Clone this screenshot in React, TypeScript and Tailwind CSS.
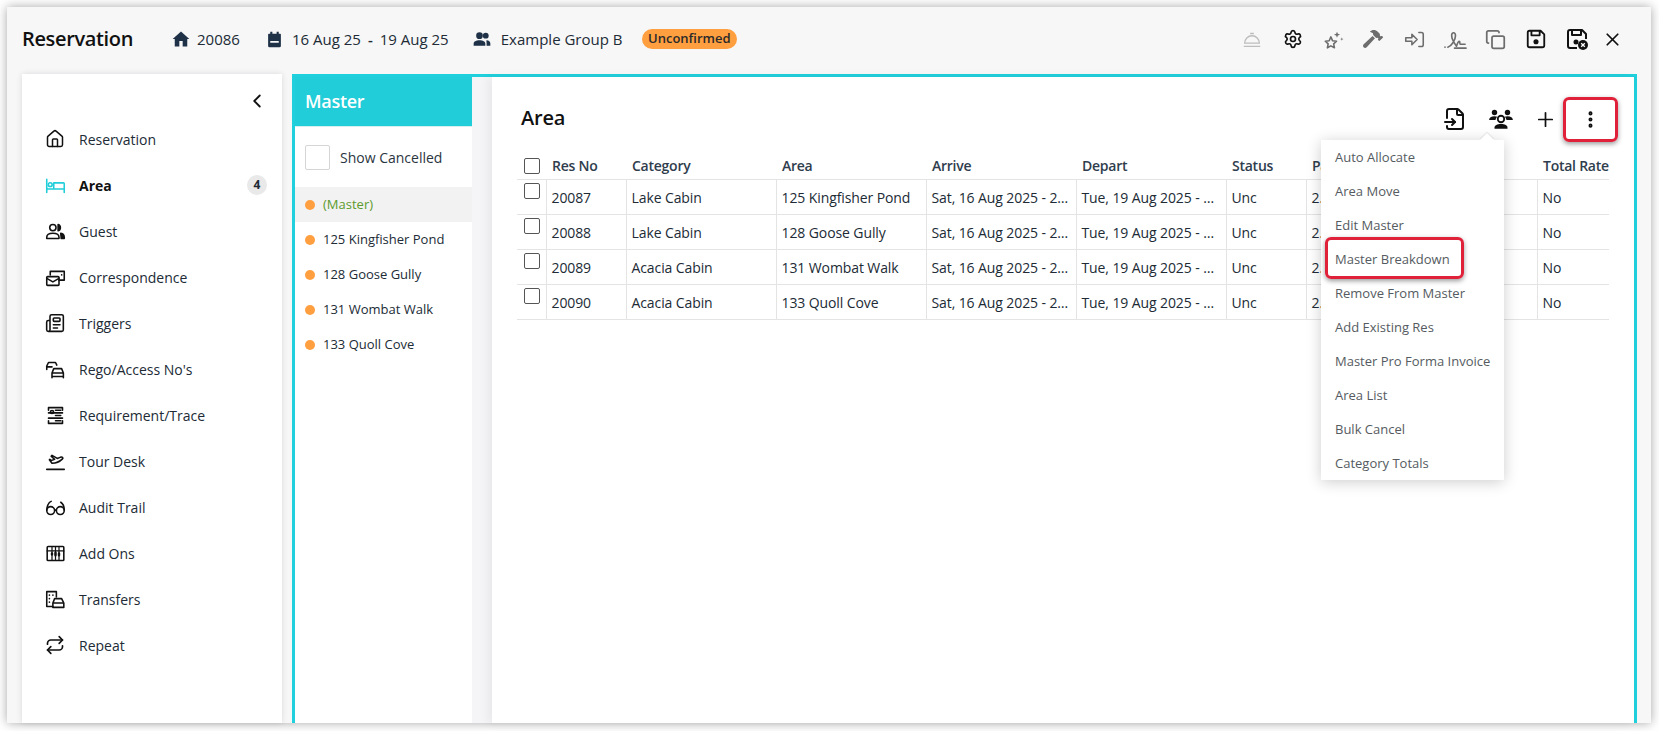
import { ChevronLeft, Copy, FileInput, EllipsisVertical, House, Newspaper, Plus, Repeat, Settings, X } from 'lucide-react';
import { FaHammer } from 'react-icons/fa';
import type { ReactNode } from 'react';

const Ico = ({ children, className = '', fill = 'none' }: { children: ReactNode; className?: string; fill?: string }) => (
  <svg viewBox="0 0 24 24" fill={fill} stroke={fill === 'none' ? 'currentColor' : 'none'} strokeWidth="1.8" strokeLinecap="round" strokeLinejoin="round" className={className}>
    {children}
  </svg>
);

// sidebar icons, drawn to look like the app's own set
const navItems: { label: string; icon: ReactNode; active?: boolean; badge?: number }[] = [
  { label: 'Reservation', icon: <House className="w-5 h-5" strokeWidth={1.8} /> },
  {
    label: 'Area',
    active: true,
    badge: 4,
    icon: (
      <Ico className="w-[21px] h-[21px] text-[#20cdd8]">
        <path d="M2 5v15M2 16h20M22 20V10a1 1 0 0 0-1-1H10v7" />
        <circle cx="6" cy="11" r="2.2" />
      </Ico>
    ),
  },
  {
    label: 'Guest',
    icon: (
      <Ico className="w-[21px] h-[21px]">
        <circle cx="9" cy="7.5" r="3.6" />
        <path d="M2 20v-1.5C2 15.5 5 14 9 14s7 1.500 7 4.500V20z" />
        <path fill="currentColor" d="M15 4a3.800 3.800 0 0 1 0 7.200zM18 14c2.500.5 4 2 4 4.500V20h-3.500c0-2.500-.5-4.500-.5-6z" />
      </Ico>
    ),
  },
  {
    label: 'Correspondence',
    icon: (
      <Ico className="w-[21px] h-[21px]">
        <path d="M6 9V5h16v10h-6" />
        <rect x="2" y="11" width="14" height="10" rx="1" />
        <path d="M2 13l7 4 7-4M19 9h.1" />
      </Ico>
    ),
  },
  {
    label: 'Triggers',
    icon: <Newspaper className="w-5 h-5" strokeWidth={1.9} />,
  },
  {
    label: "Rego/Access No's",
    icon: (
      <Ico className="w-[21px] h-[21px]">
        <path d="M2 12V8l2-4h8l1.500 3M2 9h6" />
        <path d="M8 20v-4l2-5h9l2 5v4zM8 20v1.500M21 20v1.500M8 16h13" />
      </Ico>
    ),
  },
  {
    label: 'Requirement/Trace',
    icon: (
      <Ico className="w-[21px] h-[21px]">
        <path d="M4 3h16M4 21h16M4 3v3M20 3v3M4 21v-3M20 21v-3M4 9h16M4 15h16M12 6h6M12 12h6M12 18h6" />
        <circle cx="8" cy="8" r="1.800" />
      </Ico>
    ),
  },
  {
    label: 'Tour Desk',
    icon: (
      <Ico className="w-[21px] h-[21px]">
        <path d="M2 21h20" />
        <path d="M5 10l3 4c4 0 9-2 12-5 1-1 0-2.500-2-2l-4 1.500L8 5 7 6l4 3.500-4 1.500-1.500-1.500z" />
      </Ico>
    ),
  },
  {
    label: 'Audit Trail',
    icon: (
      <Ico className="w-[21px] h-[21px]">
        <circle cx="6.500" cy="15.500" r="4.500" />
        <circle cx="17.500" cy="15.500" r="4.500" />
        <path d="M11 15h2M2 15c0-4 2-9 5-10M22 15c0-4-1-7-4-9" />
      </Ico>
    ),
  },
  {
    label: 'Add Ons',
    icon: (
      <Ico className="w-[21px] h-[21px]">
        <rect x="2.500" y="4" width="19" height="16" rx="1" />
        <path strokeWidth="1.400" d="M2.500 9h19M8 4v16M12 4v16M16 4v16" />
        <path strokeWidth="2.800" d="M8 12v1M12 11v3M16 12v2" />
      </Ico>
    ),
  },
  {
    label: 'Transfers',
    icon: (
      <Ico className="w-[21px] h-[21px]">
        <path d="M9 20H2V3h11v6" />
        <path d="M5 7h.1M9 7h.1M5 11h.1M5 15h.1" />
        <path d="M9 21v-5l2-5h8l2.500 5v5zM9 16h12.500" />
      </Ico>
    ),
  },
  {
    label: 'Repeat',
    icon: <Repeat className="w-5 h-5" strokeWidth={2} />,
  },
];

const rows = [
  { no: '20087', cat: 'Lake Cabin', area: '125 Kingfisher Pond' },
  { no: '20088', cat: 'Lake Cabin', area: '128 Goose Gully' },
  { no: '20089', cat: 'Acacia Cabin', area: '131 Wombat Walk' },
  { no: '20090', cat: 'Acacia Cabin', area: '133 Quoll Cove' },
];

const menu = ['Auto Allocate', 'Area Move', 'Edit Master', 'Master Breakdown', 'Remove From Master', 'Add Existing Res', 'Master Pro Forma Invoice', 'Area List', 'Bulk Cancel', 'Category Totals'];

const masterList = ['125 Kingfisher Pond', '128 Goose Gully', '131 Wombat Walk', '133 Quoll Cove'];

export default function App() {
  return (
    <div className="min-h-[731px] bg-white p-[7px] font-['Open_Sans',sans-serif] text-[14px] text-[#212b36]">
      <div className="relative flex h-[716px] w-[1644px] flex-col bg-[#f7f7f7] shadow-[0_0_10px_rgba(0,0,0,0.35)]">
        {/* Header */}
        <div className="flex h-[67px] items-center pb-[3px] pl-[15px] text-[15px]">
          <h1 className="w-[149px] text-[20px] font-semibold tracking-[-0.35px] text-[#111]">Reservation</h1>
          <svg viewBox="0 0 24 24" fill="#1f3147" className="mr-[6px] h-[20px] w-[20px]"><path d="M10 21v-6.500h4V21h5.500v-9H22L12 3 2 12h2.500v9z" /></svg>
          <span className="w-[69px]">20086</span>
          <svg viewBox="0 0 24 24" fill="#1f3147" className="mr-[9px] h-[17px] w-[17px]">
            <path d="M6 1h3v3h6V1h3v3h2a1 1 0 0 1 1 1v16a2 2 0 0 1-2 2H5a2 2 0 0 1-2-2V5a1 1 0 0 1 1-1h2zM6 14v2.500h12V14z" />
          </svg>
          <span>16 Aug 25</span>
          <span className="mx-[7px] font-semibold">-</span>
          <span className="w-[92px]">19 Aug 25</span>
          <svg viewBox="0 0 24 24" fill="#1f3147" className="mr-[9px] h-[20px] w-[20px]">
            <circle cx="9" cy="8" r="4" />
            <circle cx="16.500" cy="8" r="3.500" />
            <path d="M2 20v-2.500C2 15 5 13.500 9 13.500s7 1.500 7 4V20zM17.500 13.500c2.800.2 4.500 1.700 4.500 4V20h-4.500v-3c0-1.400-.5-2.600 0-3.500z" />
          </svg>
          <span className="w-[141px] whitespace-nowrap">Example Group B</span>
          <span className="flex h-[20px] w-[95px] items-center justify-center rounded-full bg-[#ff9f3f] text-[13px] font-semibold text-[#2a2a2a]">Unconfirmed</span>
          <div className="ml-auto mr-[23px] flex items-center">
            <div className="flex w-[41px] justify-center">
              <svg viewBox="0 0 24 24" fill="none" stroke="#bdbdbd" strokeWidth="1.500" className="h-[22px] w-[22px]"><path d="M3 20h18M4 16.500a8 8 0 0 1 16 0zM10 6h4" /></svg>
            </div>
            <div className="flex w-[41px] justify-center"><Settings className="h-[20px] w-[20px] text-[#111]" strokeWidth={2} /></div>
            <div className="flex w-[40px] justify-center">
              <svg viewBox="0 0 24 24" fill="none" stroke="#6d6d6d" strokeWidth="1.800" strokeLinejoin="round" className="h-[21px] w-[21px]">
                <path d="M9 9l2 4.500 4.500.5-3.300 3 .9 4.500L9 19.300 5 21.500l.9-4.500-3.300-3 4.500-.5z" />
                <path fill="#6d6d6d" stroke="none" d="M16 3l1 2.500L19.500 6.500 17 7.500 16 10l-1-2.500-2.500-1 2.500-1zM21.500 9.500l.5 1.500 1.500.5-1.500.5-.5 1.500-.5-1.500-1.500-.5 1.500-.5z" />
              </svg>
            </div>
            <div className="flex w-[40px] justify-center"><FaHammer className="h-[20px] w-[20px] text-[#6d6d6d]" /></div>
            <div className="flex w-[42px] justify-center">
              <svg viewBox="0 0 24 24" fill="none" stroke="#6d6d6d" strokeWidth="1.800" strokeLinejoin="round" strokeLinecap="round" className="h-[21px] w-[21px]">
                <path d="M2 10h7V6l6 6-6 6v-4H2zM17 4h3a2 2 0 0 1 2 2v12a2 2 0 0 1-2 2h-3" />
              </svg>
            </div>
            <div className="flex w-[40px] justify-center">
              <svg viewBox="0 0 24 24" fill="none" stroke="#6d6d6d" strokeWidth="1.700" strokeLinecap="round" strokeLinejoin="round" className="h-[23px] w-[23px]">
                <path d="M1 20h.1M4 20c4-1 8-8 8-12 0-4-4-4-4 0 0 4 3 8 5 11 1-3 2-5 3-5 1 0 0 3 1 3h5M11 21h12" />
              </svg>
            </div>
            <div className="flex w-[40px] justify-center"><Copy className="h-[21px] w-[21px] text-[#6d6d6d]" strokeWidth={2} /></div>
            <div className="flex w-[41px] justify-center">
              <svg viewBox="0 0 24 24" fill="none" stroke="#111" strokeWidth="2" strokeLinejoin="round" className="h-[22px] w-[22px]">
                <path d="M3 5a2 2 0 0 1 2-2h12l4 4v12a2 2 0 0 1-2 2H5a2 2 0 0 1-2-2zM7 3v5h9V3" />
                <circle cx="12" cy="15" r="1.800" fill="#111" />
              </svg>
            </div>
            <div className="flex w-[41px] justify-center">
              <svg viewBox="0 0 24 24" fill="none" stroke="#111" strokeWidth="2" strokeLinejoin="round" className="h-[24px] w-[24px]">
                <path d="M12 21H5a2 2 0 0 1-2-2V5a2 2 0 0 1 2-2h12l4 4v5M7 3v5h9V3" />
                <circle cx="11" cy="15" r="1.500" fill="#111" />
                <circle cx="18" cy="18" r="5" fill="#111" stroke="none" />
                <path d="M16.200 16.200l3.600 3.600M19.800 16.200l-3.600 3.600" stroke="#fff" strokeWidth="1.300" />
              </svg>
            </div>
            <div className="flex w-[31px] justify-center"><X className="h-[21px] w-[21px] text-[#111]" strokeWidth={2} /></div>
          </div>
        </div>

        {/* Body */}
        <div className="flex min-h-0 flex-1 pl-[15px] pr-[14px]">
          <aside className="relative w-[260px] shrink-0 bg-white pt-[42px] shadow-[0_0_6px_rgba(0,0,40,0.12)]">
            <ChevronLeft className="absolute right-[14px] top-[16px] h-[22px] w-[22px] text-[#111]" strokeWidth={2} />
            {navItems.map((item) => (
              <div key={item.label} className="flex h-[46px] items-center pl-[23px] pr-[15px]">
                <span className="flex w-[34px] shrink-0 items-center text-[#111]">{item.icon}</span>
                <span className={item.active ? 'font-bold text-[#111]' : ''}>{item.label}</span>
                {item.badge && (
                  <span className="ml-auto flex h-[20px] w-[20px] items-center justify-center rounded-full bg-[#e9e9e9] text-[12px] font-bold">{item.badge}</span>
                )}
              </div>
            ))}
          </aside>

          <div className="ml-[10px] flex min-w-0 flex-1 border-x-[3px] border-t-[3px] border-[#20d0dc] bg-[#f5f5f7]">
            {/* Master list */}
            <div className="w-[177px] shrink-0 bg-white">
              <div className="flex h-[50px] items-center border-b border-[#d9eef0] bg-[#20cdd8] pl-[10px] text-[18px] font-semibold tracking-[-0.3px] text-white">Master</div>
              <label className="flex h-[60px] items-center pl-[10px]">
                <span className="mr-[10px] h-[25px] w-[25px] rounded-[2px] border border-[#d5d5d5] bg-white" />
                <span className="text-[#2b3540]">Show Cancelled</span>
              </label>
              <div className="flex h-[35px] items-center bg-[#f2f2f2] pl-[10px] text-[13px] text-[#5c9a2d]">
                <span className="mr-[8px] h-[10px] w-[10px] rounded-full bg-[#ff9f3f]" />
                (Master)
              </div>
              {masterList.map((name) => (
                <div key={name} className="flex h-[35px] items-center pl-[10px] text-[13px]">
                  <span className="mr-[8px] h-[10px] w-[10px] rounded-full bg-[#ff9f3f]" />
                  {name}
                </div>
              ))}
            </div>

            {/* Area table */}
            <main className="relative ml-[20px] min-w-0 flex-1 bg-white pl-[25px] shadow-[-4px_0_10px_rgba(0,0,40,0.06)]">
              <div className="flex h-[68px] items-center pl-[4px] pt-[14px]">
                <h2 className="text-[20px] font-semibold tracking-[-0.2px] text-[#111]">Area</h2>
                <div className="absolute right-[20px] top-[20px] flex h-[44px] items-center">
                  <div className="flex w-[49px] justify-center"><FileInput className="h-[24px] w-[24px] text-[#111]" strokeWidth={2} /></div>
                  <div className="flex w-[43px] justify-center">
                    <svg viewBox="0 0 24 24" fill="#111" className="h-[26px] w-[26px]">
                      <circle cx="6" cy="6" r="2.500" />
                      <circle cx="18" cy="6" r="2.500" />
                      <path d="M1 13c0-2 2-3.500 5-3.500 1 0 2 .2 2.600.5C7.500 11 7 12 7 13zM23 13c0-2-2-3.500-5-3.500-1 0-2 .2-2.600.5 1.100 1 1.600 2 1.600 3z" />
                      <circle cx="12" cy="12" r="3" fill="none" stroke="#111" strokeWidth="1.700" />
                      <path d="M6 21v-1c0-2.500 2.500-3.500 6-3.500s6 1 6 3.500v1z" />
                    </svg>
                  </div>
                  <div className="flex w-[44px] justify-center pl-[2px]"><Plus className="h-[23px] w-[23px] text-[#111]" strokeWidth={1.8} /></div>
                  <div className="flex w-[48px] justify-center"><EllipsisVertical className="h-[21px] w-[21px] text-[#111]" strokeWidth={2.6} /></div>
                </div>
              </div>

              <table className="w-[1092px] table-fixed border-collapse tracking-[-0.1px]">
                <colgroup>
                  <col className="w-[29px]" />
                  <col className="w-[80px]" />
                  <col className="w-[150px]" />
                  <col className="w-[150px]" />
                  <col className="w-[150px]" />
                  <col className="w-[150px]" />
                  <col className="w-[80px]" />
                  <col className="w-[231px]" />
                  <col className="w-[72px]" />
                </colgroup>
                <thead>
                  <tr className="h-[34px] border-b border-[#e4e4e4] text-left font-semibold tracking-[-0.25px] text-[#2f3d4d]">
                    <th className="pl-[7px] pt-[8px] align-middle font-semibold"><span className="block h-[16px] w-[16px] rounded-[2px] border border-[#555]" /></th>
                    {['Res No', 'Category', 'Area', 'Arrive', 'Depart', 'Status', 'Pax', 'Total Rate'].map((h) => (
                      <th key={h} className="whitespace-nowrap px-[5px] pl-[6px] pt-[8px] font-semibold">{h}</th>
                    ))}
                  </tr>
                </thead>
                <tbody>
                  {rows.map((r) => (
                    <tr key={r.no} className="h-[35px] border-b border-[#e4e4e4]">
                      <td className="pl-[7px] align-top pt-[3px]"><span className="block h-[16px] w-[16px] rounded-[2px] border border-[#555]" /></td>
                      <td className="truncate border-l-[1px] border-[#e4e4e4] px-[5px] pt-[1px]">{r.no}</td>
                      <td className="truncate border-l-[1px] border-[#e4e4e4] px-[5px] pt-[1px]">{r.cat}</td>
                      <td className="truncate border-l-[1px] border-[#e4e4e4] px-[5px] pt-[1px]">{r.area}</td>
                      <td className="truncate border-l-[1px] border-[#e4e4e4] px-[5px] pt-[1px]">Sat, 16 Aug 2025 - 2:00 PM</td>
                      <td className="truncate border-l-[1px] border-[#e4e4e4] px-[5px] pt-[1px]">Tue, 19 Aug 2025 - 10:00 AM</td>
                      <td className="truncate border-l-[1px] border-[#e4e4e4] px-[5px] pt-[1px]">Unc</td>
                      <td className="truncate border-l-[1px] border-[#e4e4e4] px-[5px] pt-[1px]">2.00</td>
                      <td className="truncate border-l-[1px] border-[#e4e4e4] px-[5px] pt-[1px]">No</td>
                    </tr>
                  ))}
                </tbody>
              </table>
            </main>
          </div>
        </div>

        {/* Menu open over the table */}
        <div className="absolute left-[1314px] top-[133px] w-[183px] bg-white shadow-[0_2px_14px_rgba(0,0,0,0.2)]">
          <span className="absolute -top-[5px] right-[12px] h-[10px] w-[10px] rotate-45 bg-white shadow-[-1px_-1px_1px_rgba(0,0,0,0.08)]" />
          {menu.map((m) => (
            <div key={m} className="relative flex h-[34px] items-center pl-[14px] pt-[2px] text-[13px] text-[#555b61]">{m}</div>
          ))}
        </div>

        {/* Red call-outs */}
        <div className="absolute left-[1318px] top-[230px] h-[42px] w-[139px] rounded-[6px] border-[3px] border-[#e0213a] shadow-[0_2px_5px_rgba(0,0,0,0.4)]" />
        <div className="absolute left-[1556px] top-[90px] h-[45px] w-[55px] rounded-[6px] border-[3px] border-[#e0213a] shadow-[0_2px_5px_rgba(0,0,0,0.4)]" />
      </div>
    </div>
  );
}
